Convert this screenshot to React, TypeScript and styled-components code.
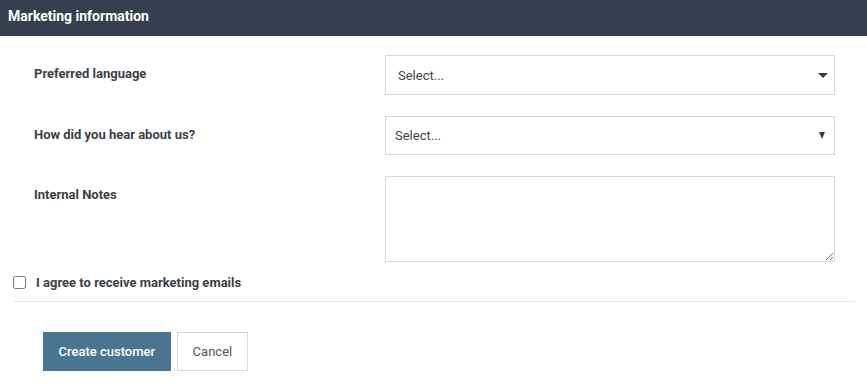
import React, { useState } from 'react';
import styled, { createGlobalStyle } from 'styled-components';

const GlobalStyle = createGlobalStyle`
    body {
        margin: 0;
        background: #fff;
        font-family: Roboto, "Liberation Sans", Arial, sans-serif;
    }
`;

const Panel = styled.div`
    width: 867px;
`;

const Header = styled.div`
    height: 36px;
    background: #363e4f;
    color: #fff;
    font-size: 14px;
    font-weight: 700;
    display: flex;
    align-items: center;
    padding: 0 8px;
    box-sizing: border-box;
    padding-bottom: 4px;
`;

const Form = styled.form`
    padding: 19px 32px 0 34px;
    display: flex;
    flex-direction: column;
    gap: 21px;
`;

const Row = styled.div`
    display: grid;
    grid-template-columns: 351px 450px;
`;

const Label = styled.label`
    font-size: 13px;
    font-weight: 700;
    color: #3b3f46;
    padding-top: 11px;
`;

const SelectBox = styled.div<{ $inset: number; $height: number }>`
    height: ${(p) => p.$height}px;
    border: 1px solid #d8d8d8;
    box-sizing: border-box;
    display: flex;
    align-items: center;
    justify-content: space-between;
    padding: 0 6px 0 ${(p) => p.$inset}px;
    font-size: 13px;
    color: #444;
`;

// wide caret for the styled select, narrow one for the native-looking select
const Caret = styled.span<{ $w: number; $h: number }>`
    width: 0;
    height: 0;
    border-left: ${(p) => p.$w}px solid transparent;
    border-right: ${(p) => p.$w}px solid transparent;
    border-top: ${(p) => p.$h}px solid #353a46;
    margin-right: ${(p) => (p.$w > 4 ? 0 : 3)}px;
`;

const Notes = styled.textarea`
    height: 86px;
    border: 1px solid #d8d8d8;
    box-sizing: border-box;
    font-family: inherit;
    font-size: 13px;
    resize: vertical;
    outline: none;
`;

const AgreeRow = styled.label`
    display: flex;
    align-items: center;
    gap: 10px;
    margin: 13px 12px 0 13px;
    padding-bottom: 11px;
    border-bottom: 1px solid #e8e8e8;
    font-size: 13px;
    font-weight: 700;
    color: #3b3f46;
`;

const Check = styled.input`
    margin: 0;
    width: 13px;
    height: 13px;
`;

const Actions = styled.div`
    display: flex;
    gap: 6px;
    padding: 30px 0 0 43px;
`;

const Button = styled.button<{ $primary?: boolean }>`
    height: 39px;
    padding: 0 ${(p) => (p.$primary ? 14.5 : 15)}px;
    font-family: inherit;
    font-size: 13px;
    font-weight: ${(p) => (p.$primary ? 500 : 400)};
    color: ${(p) => (p.$primary ? '#fff' : '#555')};
    background: ${(p) => (p.$primary ? '#4a7591' : '#fff')};
    border: 1px solid ${(p) => (p.$primary ? '#4a7591' : '#d8d8d8')};
    cursor: pointer;
`;

export default function App() {
    const [agree, setAgree] = useState(false);

    return (
        <Panel>
            <GlobalStyle />
            <Header>Marketing information</Header>
            <Form onSubmit={(e) => e.preventDefault()}>
                <Row>
                    <Label>Preferred language</Label>
                    <SelectBox $inset={12} $height={40}>
                        Select...
                        <Caret $w={5} $h={5} />
                    </SelectBox>
                </Row>
                <Row>
                    <Label>How did you hear about us?</Label>
                    <SelectBox $inset={9} $height={39}>
                        Select...
                        <Caret $w={3} $h={7} />
                    </SelectBox>
                </Row>
                <Row>
                    <Label>Internal Notes</Label>
                    <Notes />
                </Row>
            </Form>
            <AgreeRow>
                <Check type="checkbox" checked={agree} onChange={() => setAgree(!agree)} />
                I agree to receive marketing emails
            </AgreeRow>
            <Actions>
                <Button $primary type="button">Create customer</Button>
                <Button type="button">Cancel</Button>
            </Actions>
        </Panel>
    );
}
